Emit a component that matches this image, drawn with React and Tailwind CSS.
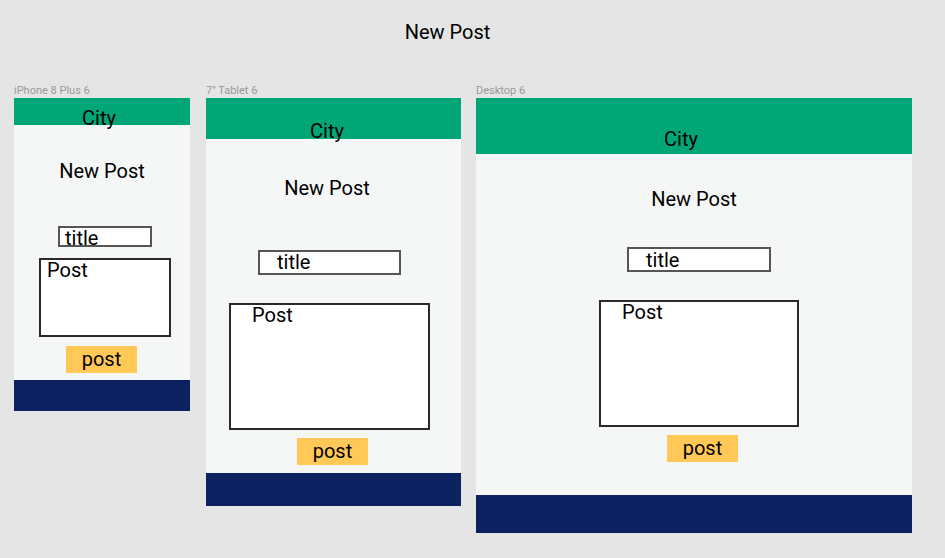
// Wireframe board: the "New Post" screen at three breakpoints.

const FONT = { fontFamily: 'Roboto, "Liberation Sans", sans-serif' }

const FRAMES = [
  {
    label: 'iPhone 8 Plus 6',
    width: 'w-[176px] mr-px',
    header: 'h-[27px] pt-[10px] pr-[6px]',
    heading: 'mt-[36px]',
    title: 'ml-[44px] mt-[45px] w-[94px] h-[21px] pl-[5px]',
    post: 'ml-[25px] mt-[11px] w-[132px] h-[79px] pl-[6px]',
    button: 'ml-[52px] mt-[9px] mb-[7px]',
    footer: 'h-[31px]',
  },
  {
    label: '7" Tablet 6',
    width: 'w-[255px]',
    header: 'h-[41px] pt-[23px] pr-[13px]',
    heading: 'mt-[39px] pr-[13px]',
    title: 'ml-[52px] mt-[52px] w-[143px] h-[25px] pl-[17px]',
    post: 'ml-[23px] mt-[28px] w-[201px] h-[127px] pl-[21px]',
    button: 'ml-[91px] mt-[8px] mb-[8px]',
    footer: 'h-[33px]',
  },
  {
    label: 'Desktop 6',
    width: 'w-[436px]',
    header: 'h-[56px] pt-[31px] pr-[26px]',
    heading: 'mt-[35px]',
    title: 'ml-[151px] mt-[38px] w-[144px] h-[25px] pl-[17px] pt-px',
    post: 'ml-[123px] mt-[28px] w-[200px] h-[127px] pl-[21px]',
    button: 'ml-[191px] mt-[8px] mb-[33px]',
    footer: 'h-[38px]',
  },
]

function Frame({ f }) {
  return (
    <div className={`shrink-0 ${f.width}`}>
      <div className="text-[11px] leading-[12px] mb-px text-[#999]">{f.label}</div>
      <div className="flex flex-col bg-[#f5f7f6]">
        <div className={`bg-[#00a676] text-center text-[20px] leading-5 text-black ${f.header}`}>
          City
        </div>
        <div className={`text-center text-[20px] leading-5 text-black ${f.heading}`}>New Post</div>
        <div className={`border-2 border-[#555] bg-white text-[20px] leading-5 text-black ${f.title}`}>
          title
        </div>
        <div className={`border-2 border-[#2a2a2a] bg-white text-[20px] leading-5 text-black ${f.post}`}>
          Post
        </div>
        <div className={`w-[71px] h-[27px] pt-[3px] bg-[#ffc857] text-center text-[20px] leading-5 text-black ${f.button}`}>
          post
        </div>
        <div className={`bg-[#0b2160] ${f.footer}`} />
      </div>
    </div>
  )
}

export default function App() {
  return (
    <div className="w-full h-[558px] bg-[#e5e5e5] overflow-hidden" style={FONT}>
      <div className="pt-[22px] pr-[50px] text-center text-[20px] leading-5 text-black">New Post</div>
      <div className="flex items-start gap-[15px] pl-[14px] mt-[43px]">
        {FRAMES.map(f => (
          <Frame key={f.label} f={f} />
        ))}
      </div>
    </div>
  )
}
